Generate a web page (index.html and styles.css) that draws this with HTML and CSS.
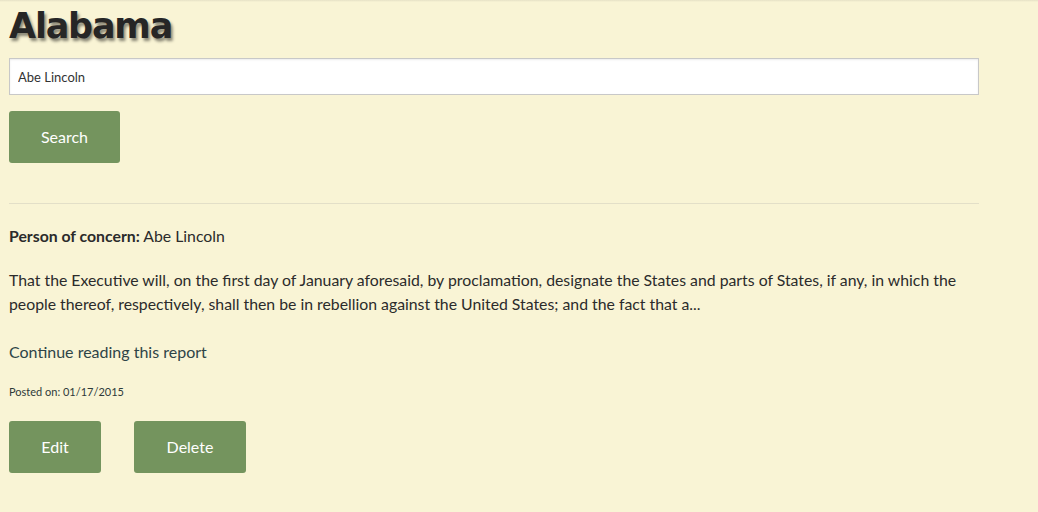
FILE: index.html
```html
<!DOCTYPE html>
<html>
<head>
<meta charset="utf-8">
<link rel="stylesheet" href="styles.css">
</head>
<body>
<div class="topline"></div>
<main class="page">
  <h1 class="title">Alabama</h1>
  <form class="search">
    <input class="search-input" type="text" value="Abe Lincoln">
    <button class="btn btn-search" type="button">Search</button>
  </form>
  <hr class="rule">
  <section class="report">
    <p class="person"><strong>Person of concern:</strong> Abe Lincoln</p>
    <p class="excerpt">That the Executive will, on the first day of January aforesaid, by proclamation, designate the States and parts of States, if any, in which the people thereof, respectively, shall then be in rebellion against the United States; and the fact that a...</p>
    <a class="more" href="#">Continue reading this report</a>
    <p class="posted">Posted on: 01/17/2015</p>
    <div class="actions">
      <button class="btn btn-edit" type="button">Edit</button>
      <button class="btn btn-delete" type="button">Delete</button>
    </div>
  </section>
</main>
</body>
</html>
```
FILE: styles.css
```css
html, body {
  margin: 0;
  padding: 0;
  background: #f9f4d5;
  font-family: Lato, "Open Sans", sans-serif;
  color: #2b2b2b;
}
.topline {
  height: 2px;
  background: linear-gradient(#e6e1c6, #f9f4d5);
}
.page {
  width: 970px;
  padding: 0 9px;
}
.title {
  margin: 0;
  padding-top: 2px;
  font-family: "DejaVu Sans", sans-serif;
  font-weight: 700;
  font-size: 35px;
  line-height: 44px;
  letter-spacing: -1.2px;
  color: #262626;
  text-shadow: 2px 3px 3px rgba(0,0,0,0.45);
}
.search {
  margin-top: 10px;
}
.search-input {
  display: block;
  box-sizing: border-box;
  width: 970px;
  height: 37px;
  margin: 0;
  padding: 0 8px;
  border: 1px solid #c8c8c8;
  box-shadow: inset 0 1px 2px rgba(0,0,0,0.08);
  background: #fff;
  font-family: Lato, sans-serif;
  font-size: 13px;
  color: #333;
  outline: none;
}
.btn {
  box-sizing: border-box;
  height: 52px;
  border: none;
  border-radius: 3px;
  background: #74945e;
  color: #fff;
  font-family: Lato, sans-serif;
  font-size: 16px;
  line-height: 20px;
  padding: 0;
  cursor: pointer;
}
.btn-search {
  display: block;
  width: 111px;
  margin-top: 16px;
}
.rule {
  margin: 40px 0 0;
  border: none;
  border-top: 1px solid #e3dfc8;
  height: 0;
}
.report {
  padding-top: 22px;
}
.person {
  margin: 0;
  font-size: 15.8px;
  line-height: 20px;
}
.excerpt {
  margin: 22px 0 0;
  font-size: 15.8px;
  line-height: 24px;
}
.more {
  display: block;
  margin-top: 25px;
  font-size: 16px;
  line-height: 22px;
  color: #2e4447;
  text-decoration: none;
}
.posted {
  margin: 22px 0 0;
  font-size: 11px;
  line-height: 14px;
  color: #2e3a3a;
}
.actions {
  display: flex;
  gap: 33px;
  margin-top: 22px;
}
.btn-edit { width: 92px; }
.btn-delete { width: 112px; }
```
